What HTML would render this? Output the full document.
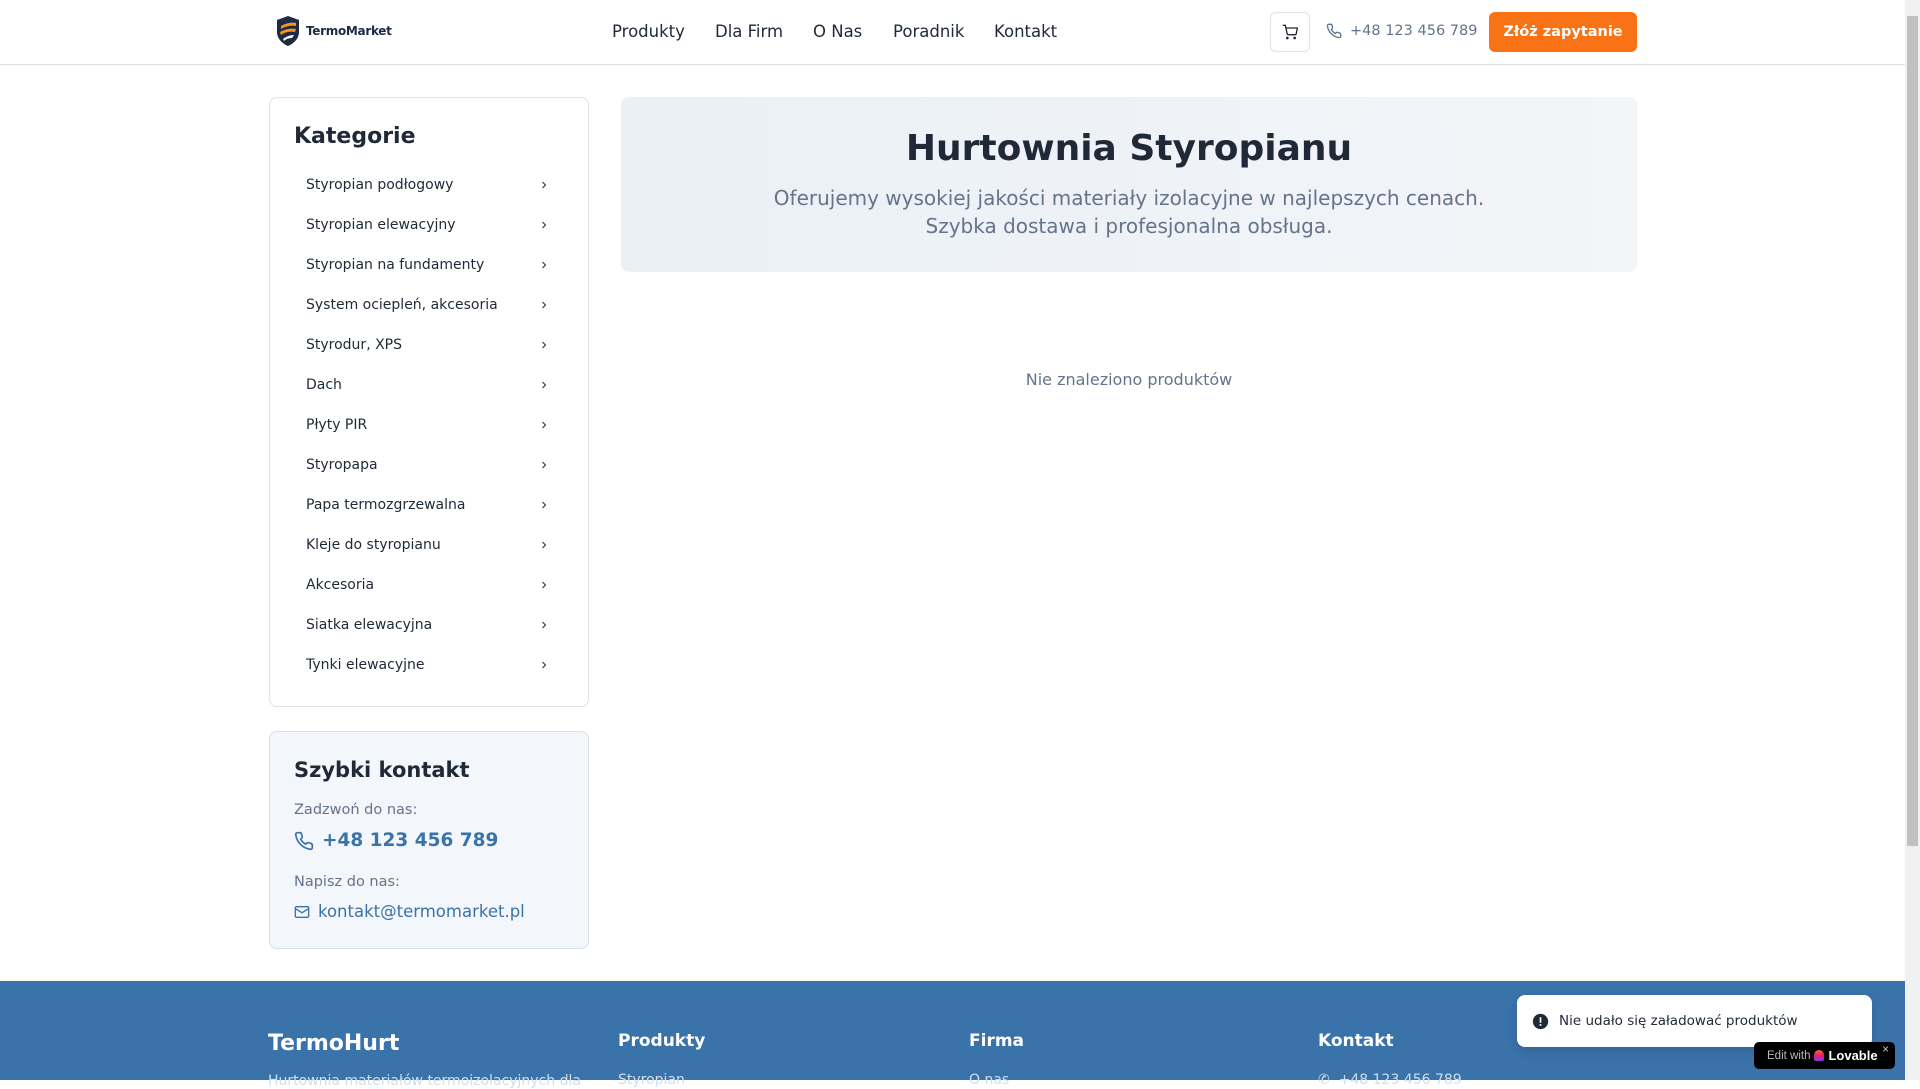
<!DOCTYPE html>
<html><head><meta charset="utf-8"><style>
*{box-sizing:border-box;margin:0;padding:0}
body{width:1920px;height:1080px;overflow:hidden;font-family:"DejaVu Sans","Liberation Sans",sans-serif;background:#fff;color:#1f2937;position:relative}
.sb{position:absolute;right:0;top:0;width:15px;height:1080px;background:#f1f1f1}
.sb .th{position:absolute;left:2px;top:16px;width:11px;height:830px;background:#c1c1c1}
header{position:absolute;left:0;top:0;width:1905px;height:65px;border-bottom:1px solid #dbe2ea;background:#fff}
.logo{position:absolute;left:272px;top:12px;width:126px;height:38px;display:flex;align-items:center;gap:5px;padding-left:3px}
.logo b{font-size:12px;color:#1e2b45;font-weight:bold;letter-spacing:-.3px}
nav{position:absolute;left:612px;top:22px;font-size:16.5px;color:#1f2937}
nav span{position:absolute;white-space:nowrap}
.cart{position:absolute;left:1270px;top:12px;width:40px;height:40px;border:1px solid #dde3ea;border-radius:6px;display:flex;align-items:center;justify-content:center}
.ph{position:absolute;left:1326px;top:23px;font-size:14.5px;color:#64748b;display:flex;align-items:center;gap:8px}
.btn{position:absolute;left:1489px;top:12px;width:148px;height:40px;background:#f97316;border-radius:6px;color:#fff;font-weight:bold;font-size:14.5px;display:flex;align-items:center;justify-content:center}
.card{position:absolute;left:269px;width:320px;border:1px solid #dbe2ea;border-radius:8px;background:#fff}
.c1{top:97px;height:610px}
.c1 h2{position:absolute;left:24px;top:26px;font-size:22px;font-weight:bold}
.cat{position:absolute;left:36px;width:244px;font-size:14px;color:#1f2937;display:flex;justify-content:space-between;align-items:center;height:20px}
.c2{top:731px;height:218px;background:#f3f6fa;border-color:#d5e0ec}
.c2 h2{position:absolute;left:24px;top:26px;font-size:21px;font-weight:bold}
.lbl{position:absolute;left:24px;font-size:14.5px;color:#64748b}
.hero{position:absolute;left:621px;top:97px;width:1016px;height:175px;border-radius:8px;background:linear-gradient(90deg,#eaf0f6,#f3f5f8)}
.hero h1{position:absolute;top:31px;width:100%;text-align:center;font-size:36px;font-weight:bold;color:#1f2937}
.hero p{position:absolute;top:87px;width:100%;text-align:center;font-size:20px;line-height:28px;color:#64748b}
.none{position:absolute;left:621px;width:1016px;top:370px;text-align:center;font-size:16px;color:#64748b}
footer{position:absolute;left:0;top:981px;width:1905px;height:99px;background:#3a73aa;color:#fff}
footer .h{position:absolute;font-weight:bold;font-size:17px}
footer .s{position:absolute;font-size:14px;color:#cfdfee}
.toast{position:absolute;left:1517px;top:995px;width:355px;height:52px;background:#fff;border-radius:8px;box-shadow:0 4px 12px rgba(0,0,0,.12);display:flex;align-items:center;padding-left:15px;gap:10px;font-size:13.5px;color:#1f2937}
.lov{position:absolute;left:1754px;top:1042px;width:141px;height:27px;background:#000;border-radius:5px;color:#bbb;font-family:"Liberation Sans",sans-serif;font-size:11.5px;display:flex;align-items:center;padding-left:13px;gap:4px}
.lov b{color:#fff;font-size:13px}
</style></head><body>
<header>
 <div class="logo"><svg width="26" height="34" viewBox="0 0 26 34"><path d="M13 2 L24 6 V18 C24 25 18 30 13 32 C8 30 2 25 2 18 V6 Z" fill="#1e2b45"/><path d="M6 12 C11 9 17 8 21 9 L21 12 C16 11 11 12 6 15Z M5 18 C10 15 16 14 21 15 L20 18 C15 17 10 18 6 21Z" fill="#f7931e"/><path d="M8 25 C12 22 16 21 19 21 L17 24 C14 24 11 25 9 27Z" fill="#fff"/></svg><b>TermoMarket</b></div>
 <nav><span style="left:0">Produkty</span><span style="left:103px">Dla Firm</span><span style="left:201px">O Nas</span><span style="left:281px">Poradnik</span><span style="left:382px">Kontakt</span></nav>
 <div class="cart"><svg width="16" height="16" viewBox="0 0 24 24" fill="none" stroke="#1f2937" stroke-width="2" stroke-linecap="round" stroke-linejoin="round"><circle cx="8" cy="21" r="1"/><circle cx="19" cy="21" r="1"/><path d="M2 2h3l2.7 12.4a2 2 0 0 0 2 1.6h9.7a2 2 0 0 0 2-1.6L23 6H6"/></svg></div>
 <div class="ph"><svg width="16" height="16" viewBox="0 0 24 24" fill="none" stroke="#64748b" stroke-width="2"><path d="M22 16.9v3a2 2 0 0 1-2.2 2 19.8 19.8 0 0 1-8.6-3.1 19.5 19.5 0 0 1-6-6A19.8 19.8 0 0 1 2.1 4.2 2 2 0 0 1 4.1 2h3a2 2 0 0 1 2 1.7c.1.9.4 1.8.7 2.7a2 2 0 0 1-.5 2.1L8 9.8a16 16 0 0 0 6 6l1.3-1.3a2 2 0 0 1 2.1-.4c.9.3 1.8.6 2.7.7a2 2 0 0 1 1.7 2z"/></svg>+48 123 456 789</div>
 <div class="btn">Złóż zapytanie</div>
</header>
<div class="card c1"><h2>Kategorie</h2>
<div class="cat" style="top:77px">Styropian podłogowy<svg width="12" height="12" viewBox="0 0 24 24" fill="none" stroke="#1f2937" stroke-width="2"><path d="m9 18 6-6-6-6"/></svg></div>
<div class="cat" style="top:117px">Styropian elewacyjny<svg width="12" height="12" viewBox="0 0 24 24" fill="none" stroke="#1f2937" stroke-width="2"><path d="m9 18 6-6-6-6"/></svg></div>
<div class="cat" style="top:157px">Styropian na fundamenty<svg width="12" height="12" viewBox="0 0 24 24" fill="none" stroke="#1f2937" stroke-width="2"><path d="m9 18 6-6-6-6"/></svg></div>
<div class="cat" style="top:197px">System ociepleń, akcesoria<svg width="12" height="12" viewBox="0 0 24 24" fill="none" stroke="#1f2937" stroke-width="2"><path d="m9 18 6-6-6-6"/></svg></div>
<div class="cat" style="top:237px">Styrodur, XPS<svg width="12" height="12" viewBox="0 0 24 24" fill="none" stroke="#1f2937" stroke-width="2"><path d="m9 18 6-6-6-6"/></svg></div>
<div class="cat" style="top:277px">Dach<svg width="12" height="12" viewBox="0 0 24 24" fill="none" stroke="#1f2937" stroke-width="2"><path d="m9 18 6-6-6-6"/></svg></div>
<div class="cat" style="top:317px">Płyty PIR<svg width="12" height="12" viewBox="0 0 24 24" fill="none" stroke="#1f2937" stroke-width="2"><path d="m9 18 6-6-6-6"/></svg></div>
<div class="cat" style="top:357px">Styropapa<svg width="12" height="12" viewBox="0 0 24 24" fill="none" stroke="#1f2937" stroke-width="2"><path d="m9 18 6-6-6-6"/></svg></div>
<div class="cat" style="top:397px">Papa termozgrzewalna<svg width="12" height="12" viewBox="0 0 24 24" fill="none" stroke="#1f2937" stroke-width="2"><path d="m9 18 6-6-6-6"/></svg></div>
<div class="cat" style="top:437px">Kleje do styropianu<svg width="12" height="12" viewBox="0 0 24 24" fill="none" stroke="#1f2937" stroke-width="2"><path d="m9 18 6-6-6-6"/></svg></div>
<div class="cat" style="top:477px">Akcesoria<svg width="12" height="12" viewBox="0 0 24 24" fill="none" stroke="#1f2937" stroke-width="2"><path d="m9 18 6-6-6-6"/></svg></div>
<div class="cat" style="top:517px">Siatka elewacyjna<svg width="12" height="12" viewBox="0 0 24 24" fill="none" stroke="#1f2937" stroke-width="2"><path d="m9 18 6-6-6-6"/></svg></div>
<div class="cat" style="top:557px">Tynki elewacyjne<svg width="12" height="12" viewBox="0 0 24 24" fill="none" stroke="#1f2937" stroke-width="2"><path d="m9 18 6-6-6-6"/></svg></div>
</div>
<div class="card c2"><h2>Szybki kontakt</h2>
<div class="lbl" style="top:70px">Zadzwoń do nas:</div>
<div style="position:absolute;left:24px;top:98px;display:flex;align-items:center;gap:8px;color:#3a73aa;font-weight:bold;font-size:18.5px"><svg width="20" height="20" viewBox="0 0 24 24" fill="none" stroke="#3a73aa" stroke-width="2"><path d="M22 16.9v3a2 2 0 0 1-2.2 2 19.8 19.8 0 0 1-8.6-3.1 19.5 19.5 0 0 1-6-6A19.8 19.8 0 0 1 2.1 4.2 2 2 0 0 1 4.1 2h3a2 2 0 0 1 2 1.7c.1.9.4 1.8.7 2.7a2 2 0 0 1-.5 2.1L8 9.8a16 16 0 0 0 6 6l1.3-1.3a2 2 0 0 1 2.1-.4c.9.3 1.8.6 2.7.7a2 2 0 0 1 1.7 2z"/></svg>+48 123 456 789</div>
<div class="lbl" style="top:142px">Napisz do nas:</div>
<div style="position:absolute;left:24px;top:170px;display:flex;align-items:center;gap:8px;color:#3a73aa;font-size:16.5px"><svg width="16" height="16" viewBox="0 0 24 24" fill="none" stroke="#3a73aa" stroke-width="2"><rect x="2" y="4" width="20" height="16" rx="2"/><path d="m22 7-10 6L2 7"/></svg>kontakt@termomarket.pl</div>
</div>
<div class="hero"><h1>Hurtownia Styropianu</h1><p>Oferujemy wysokiej jakości materiały izolacyjne w najlepszych cenach.<br>Szybka dostawa i profesjonalna obsługa.</p></div>
<div class="none">Nie znaleziono produktów</div>
<footer>
<div class="h" style="left:268px;top:50px;font-size:22px">TermoHurt</div>
<div class="s" style="left:268px;top:92px">Hurtownia materiałów termoizolacyjnych dla</div>
<div class="h" style="left:618px;top:50px">Produkty</div><div class="s" style="left:618px;top:91px">Styropian</div>
<div class="h" style="left:969px;top:50px">Firma</div><div class="s" style="left:969px;top:91px">O nas</div>
<div class="h" style="left:1318px;top:50px">Kontakt</div><div class="s" style="left:1318px;top:91px">✆ &nbsp;+48 123 456 789</div>
</footer>
<div class="toast"><svg width="17" height="17" viewBox="0 0 20 20"><circle cx="10" cy="10" r="9" fill="#1f2937"/><rect x="9" y="5" width="2" height="6.5" fill="#fff"/><rect x="9" y="13" width="2" height="2" fill="#fff"/></svg>Nie udało się załadować produktów</div>
<div class="lov">Edit with <span style="display:inline-block;width:10px;height:11px;border-radius:5px 5px 2px 2px;background:linear-gradient(180deg,#f97316,#e11d74,#7c3aed)"></span><b>Lovable</b><span style="position:absolute;right:6px;top:2px;color:#ccc">×</span></div>
<div class="sb"><div class="th"></div></div>
</body></html>
